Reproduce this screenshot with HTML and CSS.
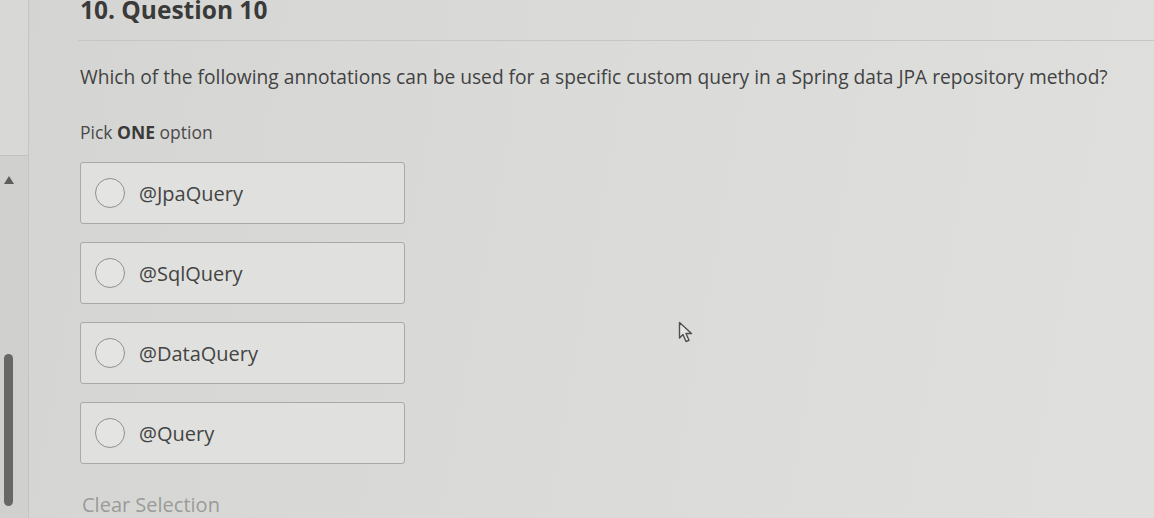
FILE: index.html
```html
<!DOCTYPE html>
<html>
<head>
<meta charset="utf-8">
<link rel="stylesheet" href="styles.css">
</head>
<body>
<div class="page">
  <aside class="sidebar">
    <div class="sidebar-top"></div>
    <div class="sidebar-arrow"></div>
    <div class="sidebar-track"><div class="sidebar-thumb"></div></div>
  </aside>
  <main class="main">
    <h1 class="title">10. Question 10</h1>
    <div class="rule"></div>
    <p class="question">Which of the following annotations can be used for a specific custom query in a Spring data JPA repository method?</p>
    <p class="pick">Pick <b>ONE</b> option</p>
    <div class="options">
      <label class="option"><span class="radio"></span><span class="opt-text">@JpaQuery</span></label>
      <label class="option"><span class="radio"></span><span class="opt-text">@SqlQuery</span></label>
      <label class="option"><span class="radio"></span><span class="opt-text">@DataQuery</span></label>
      <label class="option"><span class="radio"></span><span class="opt-text">@Query</span></label>
    </div>
    <div class="clear">Clear Selection</div>
    <svg class="cursor" width="16" height="24" viewBox="0 0 16 24"><path d="M1.5 1.5 L1.5 17 L5 13.5 L8 20.5 L11 19.3 L8 12.5 L13.5 12.5 Z" fill="#e6e7e4" stroke="#505050" stroke-width="1.4" stroke-linejoin="round"/></svg>
  </main>
</div>
</body>
</html>
```

FILE: styles.css
```css
* { box-sizing: border-box; }
html, body { margin: 0; padding: 0; }
body {
  width: 1154px;
  height: 518px;
  overflow: hidden;
  font-family: "Open Sans", "Noto Sans", sans-serif;
  color: #454545;
  background: linear-gradient(100deg, #d4d5d2 0%, #dadbd8 45%, #dfe0dd 100%);
}
.page {
  display: flex;
  height: 518px;
}
.sidebar {
  width: 29px;
  flex: none;
  background: #d0d1ce;
  border-right: 1px solid #c4c5c2;
  display: flex;
  flex-direction: column;
  align-items: center;
}
.sidebar-top {
  width: 100%;
  height: 156px;
  background: #d8d9d6;
  border-bottom: 1px solid #c2c3c0;
}
.sidebar-arrow {
  margin-top: 20px;
  margin-right: 10px;
  width: 0;
  height: 0;
  border-left: 5px solid transparent;
  border-right: 5px solid transparent;
  border-bottom: 8px solid #5d5d5d;
}
.sidebar-track {
  flex: 1;
  padding-top: 170px;
  padding-right: 11px;
}
.sidebar-thumb {
  width: 9px;
  height: 152px;
  border-radius: 5px;
  background: #666766;
}
.main {
  position: relative;
  flex: 1;
  padding-left: 51px;
}
.title {
  margin: -4px 0 0 0;
  font-size: 24.5px;
  line-height: 28px;
  font-weight: 700;
  color: #3a3a3a;
}
.rule {
  margin-top: 16px;
  margin-left: -2px;
  height: 1px;
  background: #c6c7c4;
}
.question {
  margin: 24px 0 0 0;
  font-size: 19.2px;
  line-height: 24px;
  color: #424242;
  white-space: nowrap;
}
.pick {
  margin: 32px 0 0 0;
  font-size: 17.5px;
  line-height: 22px;
  color: #4a4a4a;
}
.pick b { font-weight: 700; color: #3a3a3a; }
.options {
  margin-top: 19px;
  display: flex;
  flex-direction: column;
  gap: 18px;
}
.option {
  width: 325px;
  height: 62px;
  display: flex;
  align-items: center;
  gap: 14px;
  padding-left: 14px;
  background: #e0e1de;
  border: 1px solid #a9aaa7;
  border-radius: 3px;
}
.radio {
  width: 30px;
  height: 30px;
  border-radius: 50%;
  border: 1.5px solid #8f908e;
  background: #e4e5e2;
  flex: none;
}
.opt-text {
  font-size: 20px;
  color: #444;
}
.clear {
  margin-top: 28px;
  margin-left: 2px;
  font-size: 20px;
  line-height: 26px;
  color: #9a9b99;
}
.cursor {
  position: absolute;
  left: 649px;
  top: 321px;
}
```
